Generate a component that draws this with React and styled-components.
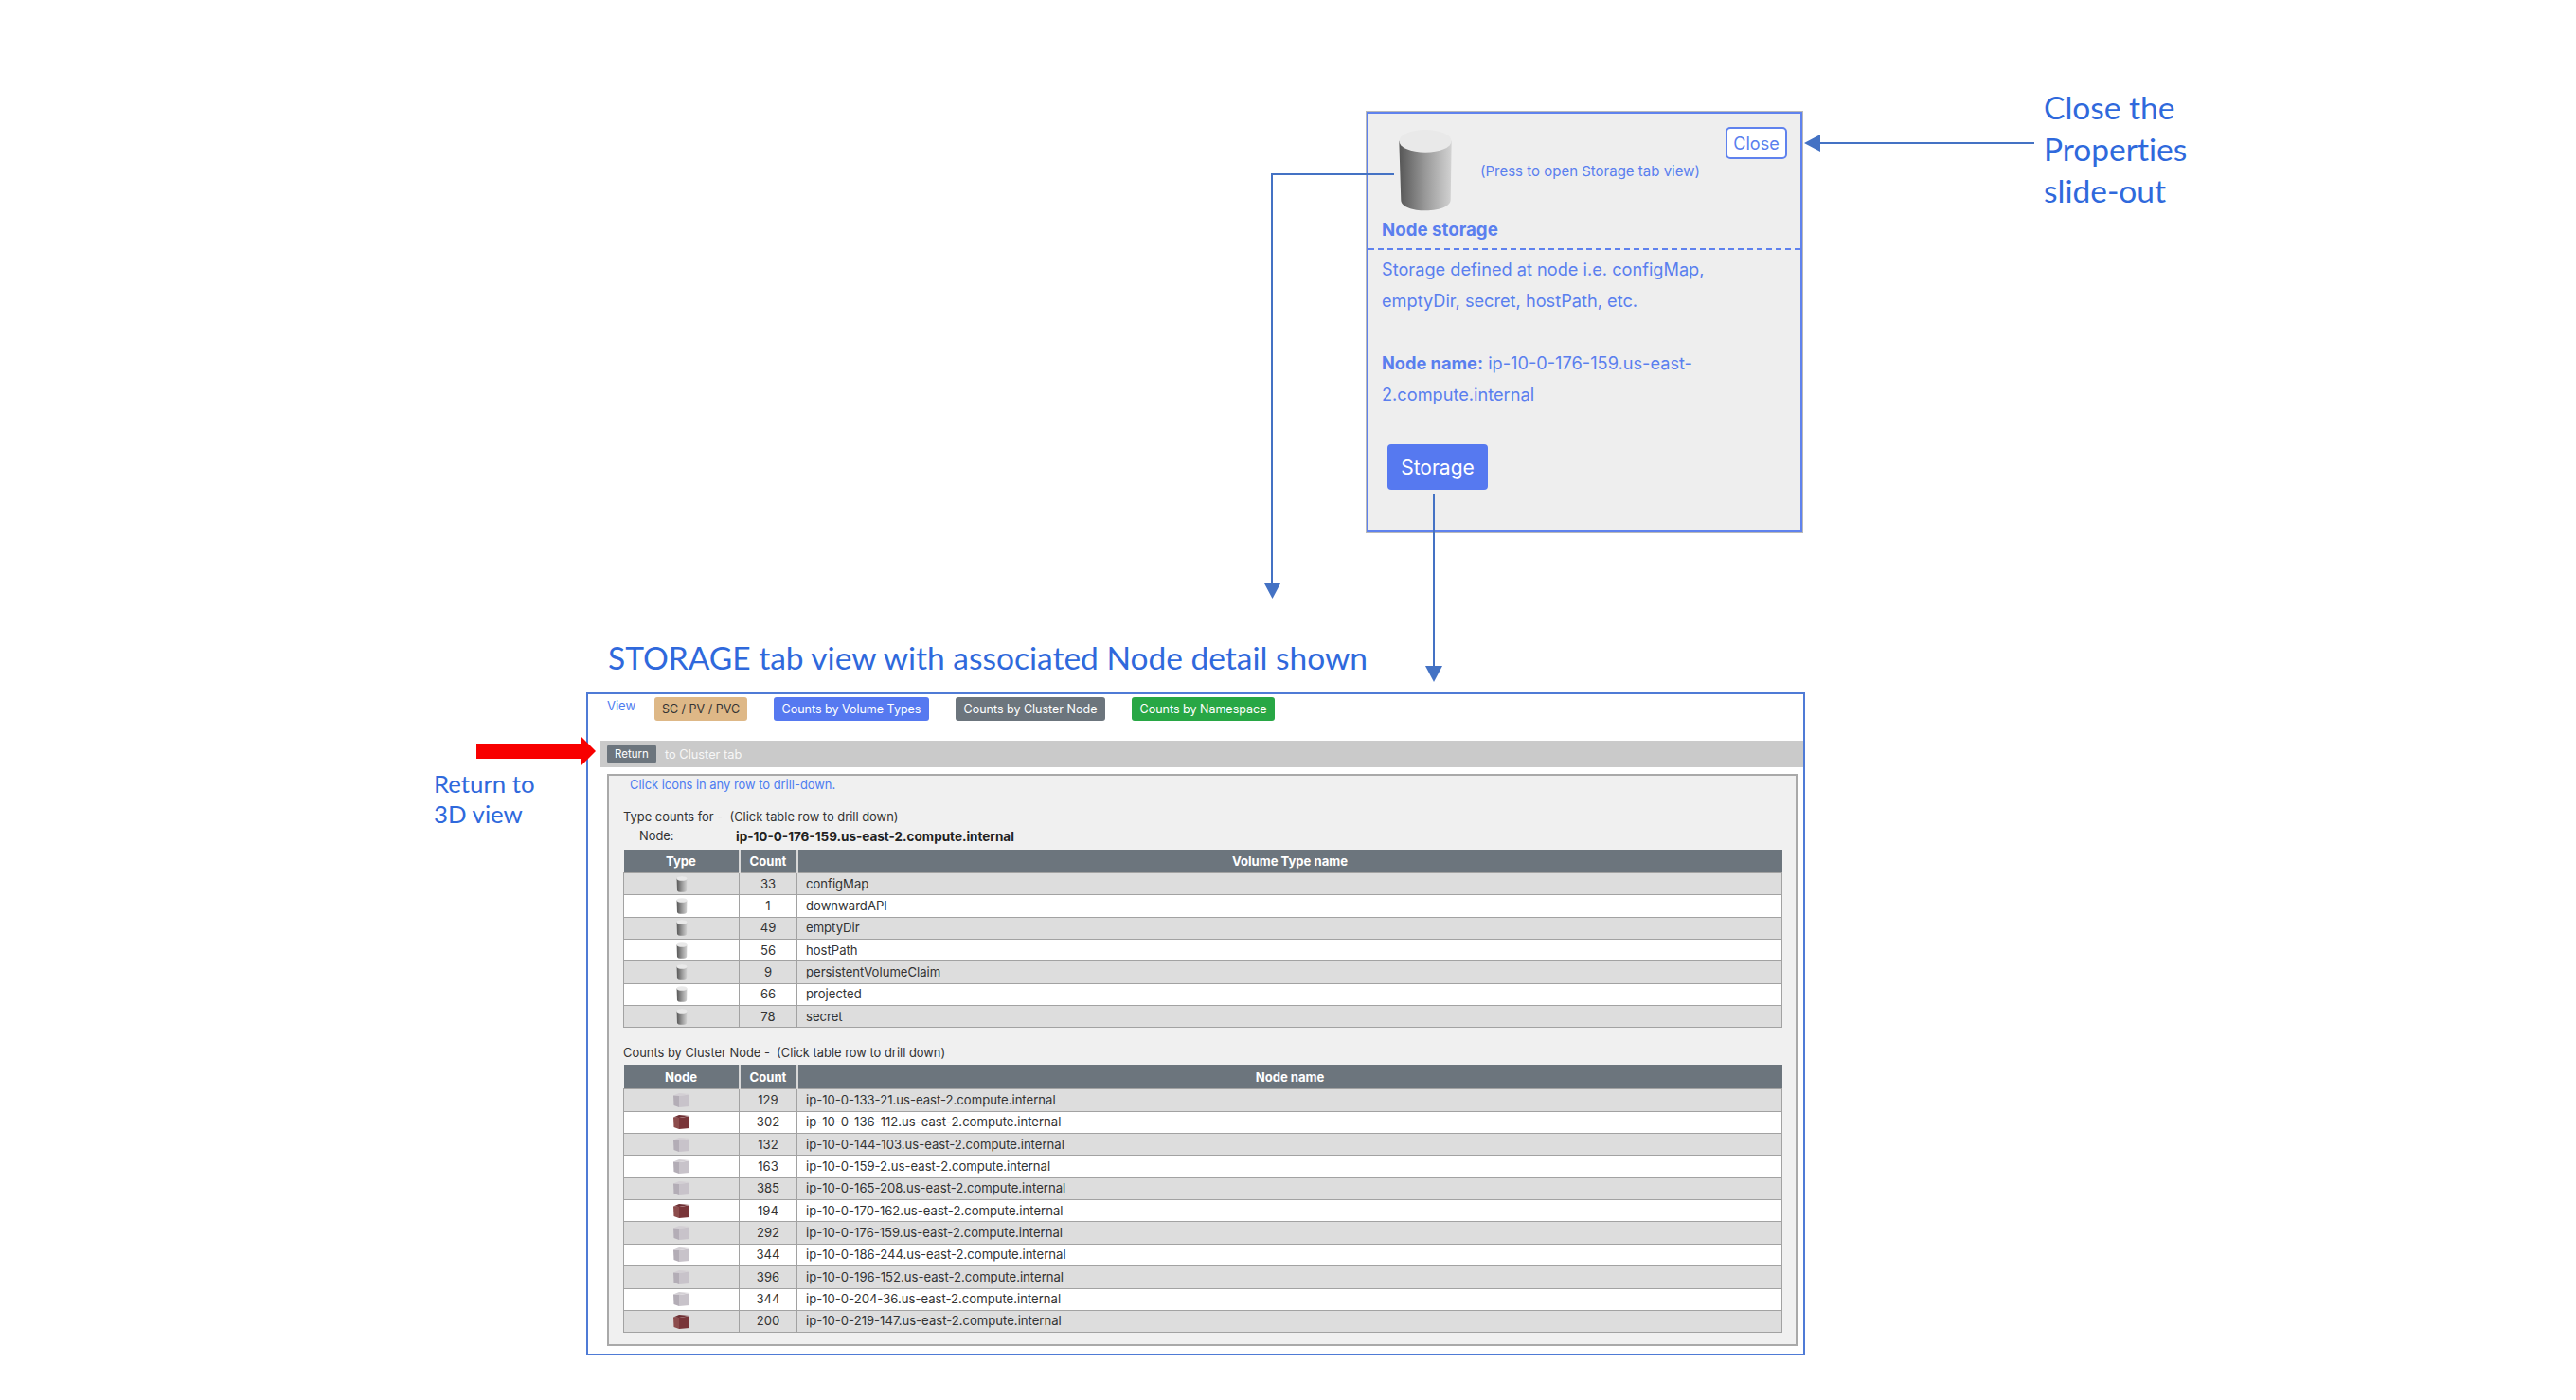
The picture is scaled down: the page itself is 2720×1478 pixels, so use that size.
import React from 'react';
import styled, { createGlobalStyle } from 'styled-components';

const Global = createGlobalStyle`
  html, body { margin: 0; padding: 0; background: #fff; }
  #root { width: 2720px; height: 1478px; }
`;

const Canvas = styled.div`
  position: relative;
  width: 2720px;
  height: 1478px;
  background: #fff;
  overflow: hidden;
  font-family: Inter, "Liberation Sans", Arial, sans-serif;
`;

const Arrows = styled.svg`
  position: absolute;
  left: 0;
  top: 0;
  pointer-events: none;
`;

const Note = styled.div`
  position: absolute;
  left: ${p => p.$x}px;
  top: ${p => p.$y}px;
  font-family: Lato, "Open Sans", sans-serif;
  font-size: ${p => p.$size}px;
  font-variant-ligatures: none;
  line-height: ${p => p.$lh}px;
  color: #2f69dc;
  white-space: pre;
`;

const Panel = styled.section`
  position: absolute;
  left: 1443px;
  top: 118px;
  width: 460px;
  height: 444px;
  box-sizing: border-box;
  background: #eee;
  border: 2px solid #5f82ee;
  outline: 1px solid #b9b9b9;
  color: #5a7fee;
`;

const PanelHead = styled.div`
  display: flex;
  align-items: flex-start;
  height: 108px;
  box-sizing: border-box;
  padding: 16px 14px 0 31px;
`;

const HeadHint = styled.div`
  margin: 36px 0 0 29px;
  font-size: 15px;
  line-height: 18px;
  white-space: nowrap;
`;

const CloseButton = styled.button`
  margin: -2px 0 0 auto;
  width: 65px;
  height: 34px;
  padding: 0;
  background: #fff;
  border: 2px solid #5f82ee;
  border-radius: 5px;
  color: #5a7fee;
  font: 18px Inter, "Liberation Sans", Arial, sans-serif;
`;

const PanelTitle = styled.div`
  padding: 0 0 4px 14px;
  font-size: 18.7px;
  font-weight: 700;
  line-height: 30px;
  border-bottom: 2px dashed #5f82ee;
`;

const PanelBody = styled.div`
  box-sizing: border-box;
  padding: 4px 14px 0;
  font-size: 18.2px;
  line-height: 33px;
`;

const BodyParagraph = styled.p`
  margin: 0 0 33px;
`;

const BodyStrong = styled.b`
  font-weight: 700;
`;

const StorageButton = styled.button`
  display: block;
  margin: 36px 0 0 6px;
  width: 106px;
  height: 48px;
  padding: 0;
  background: #5679f0;
  border: 0;
  border-radius: 4px;
  color: #fff;
  font: 21px Inter, "Liberation Sans", Arial, sans-serif;
`;

const Frame = styled.section`
  position: absolute;
  left: 619px;
  top: 731px;
  width: 1287px;
  height: 700px;
  box-sizing: border-box;
  border: 2px solid #4f7bd6;
  background: #fff;
`;

const Toolbar = styled.div`
  display: flex;
  align-items: flex-start;
  gap: 28px;
  padding: 3px 0 0 20px;
  height: 25px;
`;

const ViewLabel = styled.span`
  font-size: 13px;
  line-height: 19px;
  color: #4d7cf0;
  width: 22px;
  white-space: nowrap;
`;

const TabButton = styled.button`
  width: ${p => p.$w}px;
  height: 25px;
  padding: 0;
  border: 0;
  border-radius: 3px;
  background: ${p => p.$bg};
  color: ${p => p.$fg};
  font: 12.5px Inter, "Liberation Sans", Arial, sans-serif;
  white-space: nowrap;
`;

const ReturnBar = styled.div`
  display: flex;
  align-items: center;
  gap: 9px;
  margin: 21px 0 0 13px;
  padding-left: 7px;
  height: 28px;
  background: #cacaca;
`;

const ReturnButton = styled.button`
  width: 52px;
  height: 20px;
  padding: 0;
  border: 0;
  border-radius: 3px;
  background: #6c757d;
  color: #fff;
  font: 11.5px Inter, "Liberation Sans", Arial, sans-serif;
`;

const ReturnText = styled.span`
  font-size: 12.8px;
  color: #f7f7f7;
`;

const Inner = styled.div`
  margin: 7px 6px 0 20px;
  height: 604px;
  box-sizing: border-box;
  padding: 0 15px;
  background: #f0f0f0;
  border: 2px solid #a9a9a9;
  color: #333;
  font-size: 12.9px;
`;

const Hint = styled.div`
  padding-left: 7px;
  height: 33px;
  line-height: 19px;
  color: #4d7cf0;
`;

const Caption = styled.div`
  height: ${p => p.$h}px;
  line-height: ${p => p.$h}px;
  white-space: pre;
`;

const NodeLine = styled.div`
  display: flex;
  height: 18px;
  line-height: 18px;
  margin-bottom: 5px;
  padding-left: 17px;
`;

const NodeKey = styled.span`
  width: 102px;
`;

const NodeValue = styled.b`
  color: #222;
  font-size: 13.5px;
`;

const Table = styled.table`
  width: 1224px;
  table-layout: fixed;
  border-collapse: collapse;
  margin-bottom: ${p => p.$mb}px;
  font-size: 13.1px;
  color: #333;
`;

const Th = styled.th`
  background: #6c757d;
  color: #fff;
  font-weight: 700;
  padding: 0;
  height: ${p => p.$h}px;
  text-align: center;
  border-left: 2px solid #d8d8d8;
  &:first-child { border-left: 0; }
`;

const Row = styled.tr`
  background: ${p => (p.$odd ? '#dddddd' : '#ffffff')};
  height: 23.35px;
`;

const Td = styled.td`
  padding: ${p => (p.$name ? '0 0 0 9px' : '0')};
  text-align: ${p => (p.$name ? 'left' : 'center')};
  border: 1.5px solid #a2a2a2;
  line-height: 1;
`;

const IconSvg = styled.svg`
  display: block;
  flex: none;
  margin: ${p => (p.$center ? '0 auto' : '0')};
`;

function Cylinder({ w, h, id, center }) {
  return (
    <IconSvg $center={center} width={w} height={h} viewBox="0 0 58 88">
      <defs>
        <linearGradient id={id} x1="0" x2="1" y1="0" y2="0">
          <stop offset="0" stopColor="#565656" />
          <stop offset="0.5" stopColor="#999" />
          <stop offset="1" stopColor="#d2d2d2" />
        </linearGradient>
      </defs>
      <path d="M1 13 L3 76 C3 91 55 91 56 76 L57 13 Z" fill={`url(#${id})`} />
      <ellipse cx="29" cy="13" rx="28" ry="12" fill="#e9e9e9" />
    </IconSvg>
  );
}

function Cube({ red }) {
  const left = red ? '#8c4c4c' : '#b3adb6';
  const front = red ? '#793539' : '#c8c3ca';
  const top = red ? '#6e2f33' : '#d3cfd4';
  return (
    <IconSvg $center width="17" height="15" viewBox="0 0 17 15">
      <path d="M0 2.5 L6 0 L17 1 L6 3 Z" fill={top} />
      <path d="M0 2.5 L6 3 L6 15 L0.5 13 Z" fill={left} />
      <path d="M6 3 L17 1.5 L17 14 L6 15 Z" fill={front} />
    </IconSvg>
  );
}

const types = [
  [33, 'configMap'], [1, 'downwardAPI'], [49, 'emptyDir'], [56, 'hostPath'],
  [9, 'persistentVolumeClaim'], [66, 'projected'], [78, 'secret'],
];

const nodes = [
  [129, 'ip-10-0-133-21', 0], [302, 'ip-10-0-136-112', 1], [132, 'ip-10-0-144-103', 0],
  [163, 'ip-10-0-159-2', 0], [385, 'ip-10-0-165-208', 0], [194, 'ip-10-0-170-162', 1],
  [292, 'ip-10-0-176-159', 0], [344, 'ip-10-0-186-244', 0], [396, 'ip-10-0-196-152', 0],
  [344, 'ip-10-0-204-36', 0], [200, 'ip-10-0-219-147', 1],
];

const Cols = () => (
  <colgroup>
    <col style={{ width: 122 }} />
    <col style={{ width: 61 }} />
    <col />
  </colgroup>
);

export default function App() {
  return (
    <Canvas>
      <Global />

      <Note $x={2158} $y={91} $size={33.5} $lh={44}>{'Close the\nProperties\nslide-out'}</Note>
      <Note $x={642} $y={672} $size={33.5} $lh={44}>STORAGE tab view with associated Node detail shown</Note>
      <Note $x={458} $y={812} $size={25.8} $lh={31.5}>{'Return to\n3D view'}</Note>

      <Panel>
        <PanelHead>
          <Cylinder w={58} h={87} id="bigCyl" />
          <HeadHint>(Press to open Storage tab view)</HeadHint>
          <CloseButton>Close</CloseButton>
        </PanelHead>
        <PanelTitle>Node storage</PanelTitle>
        <PanelBody>
          <BodyParagraph>
            Storage defined at node i.e. configMap,<br />
            emptyDir, secret, hostPath, etc.
          </BodyParagraph>
          <BodyParagraph>
            <BodyStrong>Node name:</BodyStrong>{' '}
            <span>ip-10-0-176-159.us-east-</span><br />
            <span>2.compute.internal</span>
          </BodyParagraph>
          <StorageButton>Storage</StorageButton>
        </PanelBody>
      </Panel>

      <Frame>
        <Toolbar>
          <ViewLabel>View</ViewLabel>
          <TabButton $w={98} $bg="#deb887" $fg="#333">SC / PV / PVC</TabButton>
          <TabButton $w={164} $bg="#5679f0" $fg="#fff">Counts by Volume Types</TabButton>
          <TabButton $w={158} $bg="#6c757d" $fg="#fff">Counts by Cluster Node</TabButton>
          <TabButton $w={151} $bg="#28a745" $fg="#fff">Counts by Namespace</TabButton>
        </Toolbar>
        <ReturnBar>
          <ReturnButton>Return</ReturnButton>
          <ReturnText>to Cluster tab</ReturnText>
        </ReturnBar>
        <Inner>
          <Hint>Click icons in any row to drill-down.</Hint>
          <Caption $h={22}>{'Type counts for -  (Click table row to drill down)'}</Caption>
          <NodeLine>
            <NodeKey>Node:</NodeKey>
            <NodeValue>ip-10-0-176-159.us-east-2.compute.internal</NodeValue>
          </NodeLine>
          <Table $mb={14}>
            <Cols />
            <thead>
              <tr><Th $h={24}>Type</Th><Th $h={24}>Count</Th><Th $h={24}>Volume Type name</Th></tr>
            </thead>
            <tbody>
              {types.map(([count, name], i) => (
                <Row key={name} $odd={i % 2 === 0}>
                  <Td><Cylinder center w={12} h={17} id={`cyl${i}`} /></Td>
                  <Td>{count}</Td>
                  <Td $name>{name}</Td>
                </Row>
              ))}
            </tbody>
          </Table>
          <Caption $h={25}>{'Counts by Cluster Node -  (Click table row to drill down)'}</Caption>
          <Table $mb={0}>
            <Cols />
            <thead>
              <tr><Th $h={25}>Node</Th><Th $h={25}>Count</Th><Th $h={25}>Node name</Th></tr>
            </thead>
            <tbody>
              {nodes.map(([count, name, red], i) => (
                <Row key={name} $odd={i % 2 === 0}>
                  <Td><Cube red={!!red} /></Td>
                  <Td>{count}</Td>
                  <Td $name>{name}.us-east-2.compute.internal</Td>
                </Row>
              ))}
            </tbody>
          </Table>
        </Inner>
      </Frame>

      <Arrows width="2720" height="1478" viewBox="0 0 2720 1478" fill="none">
        <path d="M1472 184 H1343 V622" stroke="#4472c4" strokeWidth="2" />
        <path d="M1335 616 H1352 L1343.5 632 Z" fill="#4472c4" />
        <path d="M1514 522 V708" stroke="#4472c4" strokeWidth="2" />
        <path d="M1505 703 H1523 L1514 720 Z" fill="#4472c4" />
        <path d="M2148 151 H1920" stroke="#4472c4" strokeWidth="2" />
        <path d="M1905 151 L1922 142 V160 Z" fill="#4472c4" />
        <path d="M503 785 H613 V777 L629 793 L613 809 V801 H503 Z" fill="#f80000" />
      </Arrows>
    </Canvas>
  );
}
